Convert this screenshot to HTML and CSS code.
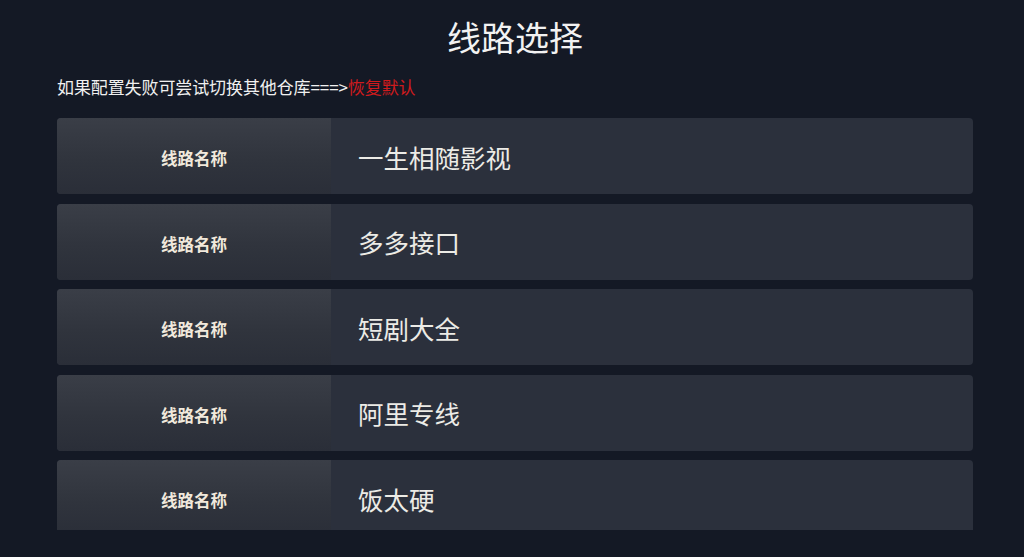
FILE: index.html
```html
<!DOCTYPE html>
<html lang="zh-CN">
<head>
<meta charset="utf-8">
<title>线路选择</title>
<link rel="stylesheet" href="styles.css">
</head>
<body>
<main class="page">
  <h1 class="title">线路选择</h1>
  <p class="hint">如果配置失败可尝试切换其他仓库===&gt;<span class="reset">恢复默认</span></p>
  <div class="list">
    <div class="row"><div class="label">线路名称</div><div class="value">一生相随影视</div></div>
    <div class="row"><div class="label">线路名称</div><div class="value">多多接口</div></div>
    <div class="row"><div class="label">线路名称</div><div class="value">短剧大全</div></div>
    <div class="row"><div class="label">线路名称</div><div class="value">阿里专线</div></div>
    <div class="row"><div class="label">线路名称</div><div class="value">饭太硬</div></div>
  </div>
</main>
</body>
</html>
```
FILE: styles.css
```css
html, body {
  margin: 0;
  padding: 0;
  background: #141925;
  height: 100%;
  overflow: hidden;
}
body {
  font-family: "Noto Sans CJK SC", "Noto Sans", sans-serif;
  color: #ecebe7;
}
.page {
  padding: 17px 51px 0 57px;
  display: flex;
  flex-direction: column;
}
.title {
  margin: 0;
  font-size: 34px;
  line-height: 40px;
  font-weight: 400;
  text-align: center;
  color: #f2f2f2;
}
.hint {
  margin: 18px 0 0;
  font-size: 17px;
  line-height: 24px;
  color: #f0f0f0;
  letter-spacing: -0.1px;
}
.reset {
  color: #cf1b1d;
}
.list {
  margin-top: 19px;
  height: 412px;
  overflow: hidden;
  display: flex;
  flex-direction: column;
  gap: 9.5px;
}
.row {
  flex: 0 0 76px;
  display: flex;
  border-radius: 4px;
  overflow: hidden;
  background: #2b303c;
}
.label {
  flex: 0 0 274px;
  display: flex;
  align-items: center;
  justify-content: center;
  padding-top: 4px;
  box-sizing: border-box;
  background: linear-gradient(180deg, #3a3e47 0%, #30343d 55%, #2a2e38 100%);
  font-size: 16.5px;
  font-weight: 700;
  color: #f1e9dc;
}
.value {
  flex: 1;
  display: flex;
  align-items: center;
  padding-left: 27px;
  font-size: 25.5px;
  color: #ecebe6;
}
```
